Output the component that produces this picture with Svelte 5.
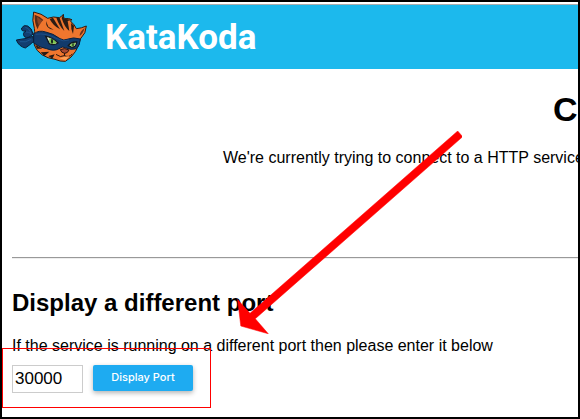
<script>
  let port = $state('30000');
</script>

<div class="page">
  <header>
    <svg class="cat" viewBox="45 36 216 156" aria-hidden="true">
      <g fill="#123e70" stroke="#0a1c34" stroke-width="3" stroke-linejoin="round">
        <path d="M98 112 Q76 120 49 123 Q56 142 76 147 Q90 138 102 126Z" />
        <path d="M99 105 Q84 121 73 113 Q66 101 78 96 Q62 98 65 87 Q71 76 83 81 Q96 87 99 105Z" />
      </g>
      <path d="M76 85 Q88 88 93 103 M60 128 Q76 132 94 121 M78 99 Q87 98 94 105" fill="none" stroke="#2463a0" stroke-width="2" />
      <path d="M101 39 Q124 43 143 58 Q160 51 178 56 Q185 53 190 46 Q190 54 193 59 Q207 57 216 62 Q208 65 214 69 Q223 76 229 89 Q244 88 259 81 Q259 102 241 120 Q237 142 226 158 Q215 176 196 187 Q180 188 165 181 Q143 178 127 168 Q108 155 103 138 L101 105 Q106 99 103 88 Q95 65 101 39Z" fill="#ef762e" stroke="#30180e" stroke-width="3" stroke-linejoin="round" />
      <path d="M104 47 Q118 51 130 63 Q117 73 113 91 Q103 73 104 47Z" fill="#572b19" />
      <path d="M111 53 Q111 70 117 80 L127 65Z" fill="#8d4323" />
      <path d="M254 87 Q250 103 239 111 Q239 97 254 87Z" fill="#6d321c" />
      <g fill="#2b1b14">
        <path d="M149 60 L159 56 L180 91 Q159 80 149 60Z" />
        <path d="M169 56 L179 57 L193 96 Q177 80 169 56Z" />
        <path d="M185 57 L190 46 L192 59 L216 62 L203 66 L208 96 Q193 84 185 57Z" />
        <path d="M213 72 L222 80 L219 105 Q212 90 213 72Z" />
        <path d="M138 66 L145 83 L161 92 Q137 91 138 66Z" />
        <path d="M106 137 L127 149 L111 149Z M122 160 L148 158 L133 171Z M145 171 L164 166 L157 179Z" />
        <path d="M229 132 L240 128 L230 144Z" />
      </g>
      <path d="M101 105 Q116 92 137 99 Q159 103 180 119 Q192 126 201 121 Q220 113 241 120 Q240 140 229 149 Q213 154 198 147 Q187 140 177 149 Q162 158 140 149 Q119 146 101 132Z" fill="#123a6b" stroke="#0b203c" stroke-width="3" />
      <path d="M107 106 Q138 101 171 119 Q190 130 207 123" fill="none" stroke="#1d4e85" stroke-width="3" />
      <path d="M137 112 Q155 113 174 132 Q161 141 148 134Z" fill="#e8edcf" stroke="#111a20" stroke-width="4" />
      <path d="M148 118 Q164 121 169 132 Q156 138 148 130Z" fill="#7bc64d" />
      <ellipse cx="156" cy="127" rx="3" ry="8" fill="#142218" />
      <path d="M205 140 Q213 128 230 129 Q229 144 216 145Z" fill="#e8edcf" stroke="#111a20" stroke-width="4" />
      <path d="M210 139 Q216 131 226 132 Q224 142 216 143Z" fill="#7bc64d" />
      <ellipse cx="219" cy="137" rx="2" ry="6" fill="#142218" />
      <path d="M181 152 Q194 145 207 153 Q203 163 194 163 Q184 162 181 152Z" fill="#aa482e" stroke="#31150f" stroke-width="3" />
      <path d="M194 163 L193 170 Q182 177 169 167 M193 170 Q207 177 216 166" fill="none" stroke="#28150e" stroke-width="3" stroke-linecap="round" />
      <path d="M178 178 Q193 173 208 171 L197 184Z" fill="#ffa257" />
    </svg>
    <span class="brand">KataKoda</span>
  </header>

  <main>
    <section class="status">
      <h1>Co</h1>
      <p>We're currently trying to connect to a HTTP service</p>
    </section>
    <hr />
    <section class="chooser">
      <h2>Display a different port</h2>
      <p><label for="port">If the service is running on a different port then please enter it below</label></p>
      <form onsubmit={(event) => event.preventDefault()}>
        <input id="port" type="text" inputmode="numeric" bind:value={port} />
        <button type="submit">Display Port</button>
      </form>
      <div class="highlight"></div>
    </section>
  </main>

  <svg class="arrow" width="225" height="203" viewBox="237 131 225 203" aria-hidden="true">
    <path d="M457.7 131L462.7 136.7L255.3 318.7L268.3 333.8L240.8 326L237.6 299.5L250 313.3Z" fill="#f00" stroke="#f00" stroke-width=".5" />
  </svg>
</div>

<style>
  :global(body) {
    margin: 0;
    background: #fff;
  }
  .page {
    position: relative;
    box-sizing: border-box;
    min-height: 100vh;
    padding-top: 2px;
    border: 2px solid #000;
    overflow: hidden;
    color: #000;
    font: 16px/18px "Liberation Sans", Arial, sans-serif;
  }
  header {
    display: flex;
    align-items: center;
    gap: 18px;
    height: 64px;
    padding-left: 13px;
    border-top: 1px solid #a9adb0;
    background: #1cb9ed;
  }
  .cat {
    width: 72px;
    height: 52px;
  }
  .brand {
    padding-top: 2px;
    color: #fff;
    font: 700 35px/40px Roboto, sans-serif;
  }
  main {
    padding: 22px 0 22px 10px;
  }
  h1, h2, p {
    margin: 0;
  }
  .status {
    padding-left: 211px;
    white-space: nowrap;
  }
  h1 {
    margin-bottom: 21px;
    padding-left: 330px;
    font-size: 34px;
    line-height: 37px;
  }
  hr {
    height: 0;
    margin: 90px 0 30px;
    border: 0;
    border-top: 1px solid #999;
    border-bottom: 1px solid #eee;
  }
  .chooser {
    position: relative;
  }
  h2 {
    margin-bottom: 21px;
    font-size: 24px;
    line-height: 27px;
  }
  form {
    display: flex;
    align-items: flex-start;
    gap: 10px;
    margin-top: 10px;
  }
  input {
    box-sizing: border-box;
    width: 71px;
    height: 28px;
    padding: 0 2px;
    border: 1px solid #ccc;
    border-radius: 0;
    background: #fff;
    color: #000;
    font: 17px/20px "Liberation Sans", Arial, sans-serif;
  }
  button {
    width: 100px;
    height: 26px;
    padding: 0 0 2px;
    border: 0;
    border-radius: 2px;
    background: #1eabf1;
    box-shadow: 0 2px 5px rgb(0 0 0 / 30%);
    color: #fff;
    font: 500 11px/16px Inter, sans-serif;
  }
  .highlight {
    position: absolute;
    top: 59px;
    left: -10px;
    box-sizing: border-box;
    width: 209px;
    height: 60px;
    border: 1px solid #f00;
    pointer-events: none;
  }
  .arrow {
    position: absolute;
    top: 129px;
    left: 235px;
    pointer-events: none;
  }
</style>
